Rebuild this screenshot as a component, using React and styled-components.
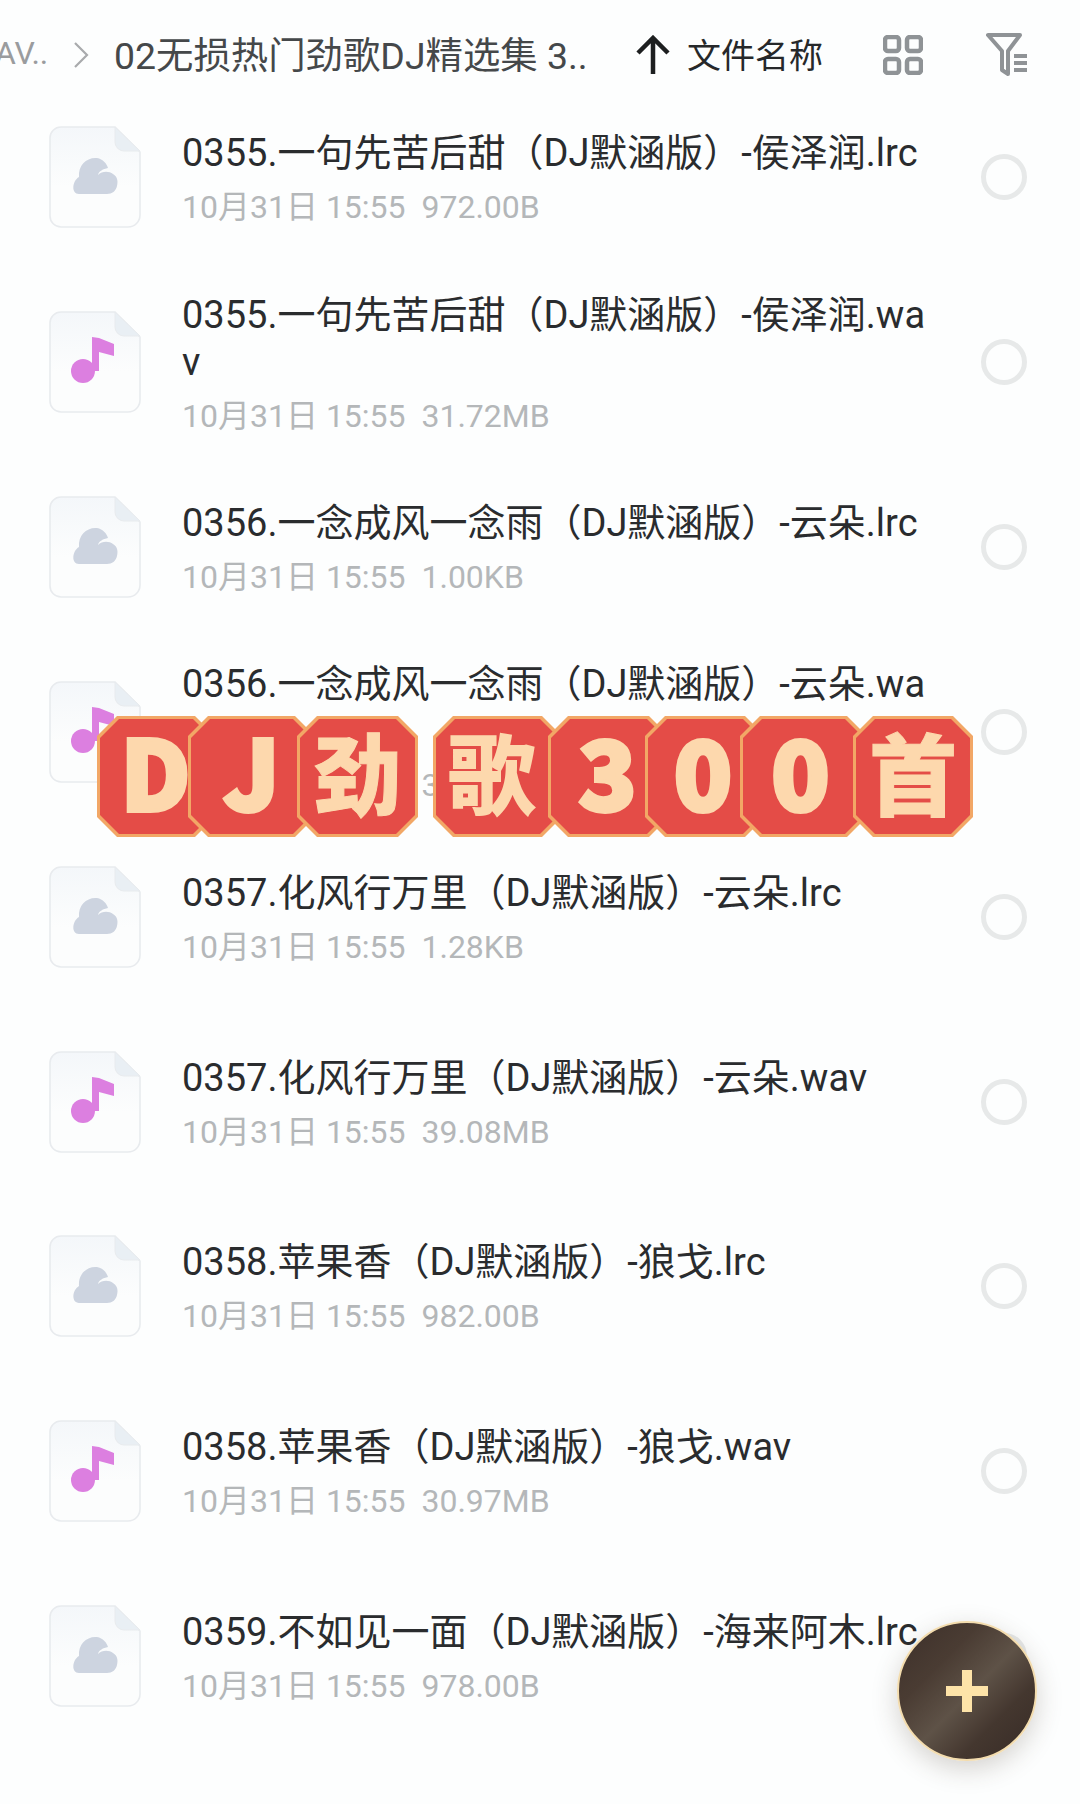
import React from 'react';
import styled, { createGlobalStyle } from 'styled-components';

const GlobalStyle = createGlobalStyle`
  html, body {
    margin: 0;
    padding: 0;
    background: #fdfefe;
  }
`

const Page = styled.div`
  position: relative;
  width: 1080px;
  height: 1804px;
  overflow: hidden;
  background: #fdfefe;
  font-family: Roboto, "Noto Sans CJK SC", sans-serif;
`
const Header = styled.div`
  display: flex;
  align-items: center;
  height: 85px;
  padding-top: 25px;
  box-sizing: border-box;
  margin-left: -5px;
  white-space: nowrap;
`
const Crumb = styled.span`
  color: #9a9c9e;
  font-size: 32px;
  width: 52px;
  margin-bottom: 4px;
`
const Current = styled.span`
  color: #45484a;
  font-size: 37.4px;
  margin-left: 25px;
  margin-bottom: 4px;
  width: 473px;
`
const SortLabel = styled.span`
  color: #26282a;
  font-size: 34px;
  margin-left: 16px;
  margin-bottom: 4px;
  width: 139px;
`
const HeadIcon = styled.svg`
  flex: none;
  display: block;
  margin-left: ${props => props.$left}px;
`
const Row = styled.div`
  display: flex;
  align-items: center;
  height: 184.85px;
  padding-left: 49px;
`
const DocIcon = styled.svg`
  flex: none;
  display: block;
  width: 92px;
  height: 102px;
`
const Info = styled.div`
  width: 752px;
  margin-left: 41px;
  padding-top: 3px;
`
const Title = styled.div`
  color: #2a2c2e;
  font-size: 38px;
  line-height: 47px;
  word-break: break-all;
`
const Meta = styled.div`
  color: #b4b7b9;
  font-size: 32px;
  line-height: 40px;
  margin-top: 10px;
  white-space: pre;
`
const Radio = styled.div`
  flex: none;
  box-sizing: border-box;
  width: 46px;
  height: 46px;
  margin-left: 47px;
  border: 5px solid #e7e9e9;
  border-radius: 50%;
`
const Banner = styled.div`
  position: absolute;
  left: 97px;
  top: 716px;
  display: flex;
  height: 121px;
`
const Tile = styled.div`
  position: relative;
  flex: none;
  width: ${props => props.$w}px;
  height: 121px;
  box-sizing: border-box;
  padding-bottom: 14px;
  padding-left: ${props => Math.max(props.$shift, 0)}px;
  padding-right: ${props => Math.max(-props.$shift, 0)}px;
  margin-left: ${props => props.$gap}px;
  display: flex;
  align-items: center;
  justify-content: center;
  clip-path: polygon(20px 0, calc(100% - 20px) 0, 100% 20px, 100% calc(100% - 20px), calc(100% - 20px) 100%, 20px 100%, 0 calc(100% - 20px), 0 20px);
  background: #f2a766;

  &::before {
    content: '';
    position: absolute;
    inset: 3px;
    background: #e44c47;
    clip-path: polygon(19px 0, calc(100% - 19px) 0, 100% 19px, 100% calc(100% - 19px), calc(100% - 19px) 100%, 19px 100%, 0 calc(100% - 19px), 0 19px);
  }
`
const TileText = styled.span`
  position: relative;
  color: #fdd8ad;
  font-family: "Noto Sans CJK SC", sans-serif;
  font-weight: 900;
  font-size: ${props => props.$size}px;
  line-height: 1;
  -webkit-text-stroke: ${props => props.$stroke}px #fdd8ad;
`
const Fab = styled.div`
  position: absolute;
  left: 897px;
  top: 1621px;
  width: 140px;
  height: 140px;
  box-sizing: border-box;
  border: 2px solid #f3dcae;
  border-radius: 50%;
  background: linear-gradient(135deg, #3c2f29 0%, #4a3c33 30%, #5e5247 52%, #44372f 72%, #362a25 100%);
  box-shadow: 0 8px 26px rgba(70, 55, 40, 0.22);
  display: flex;
  align-items: center;
  justify-content: center;
`

const files = [
  ['0355.一句先苦后甜（DJ默涵版）-侯泽润.lrc', '972.00B'],
  ['0355.一句先苦后甜（DJ默涵版）-侯泽润.wav', '31.72MB'],
  ['0356.一念成风一念雨（DJ默涵版）-云朵.lrc', '1.00KB'],
  ['0356.一念成风一念雨（DJ默涵版）-云朵.wav', '35.20MB'],
  ['0357.化风行万里（DJ默涵版）-云朵.lrc', '1.28KB'],
  ['0357.化风行万里（DJ默涵版）-云朵.wav', '39.08MB'],
  ['0358.苹果香（DJ默涵版）-狼戈.lrc', '982.00B'],
  ['0358.苹果香（DJ默涵版）-狼戈.wav', '30.97MB'],
  ['0359.不如见一面（DJ默涵版）-海来阿木.lrc', '978.00B'],
]

// each tile runs on under the next one, so only a small notch shows between them
const tiles = [
  { t: 'D', w: 118, gap: 0, size: 96, stroke: 4, shift: -1 },
  { t: 'J', w: 127, gap: -27, size: 96, stroke: 4, shift: 0 },
  { t: '劲', w: 121, gap: -18, size: 88, stroke: 1, shift: 0 },
  { t: '歌', w: 129, gap: 15, size: 88, stroke: 0, shift: -12 },
  { t: '3', w: 121, gap: -14, size: 96, stroke: 4, shift: -2 },
  { t: '0', w: 120, gap: -24, size: 96, stroke: 4, shift: -4 },
  { t: '0', w: 127, gap: -25, size: 96, stroke: 4, shift: -6 },
  { t: '首', w: 120, gap: -14, size: 88, stroke: 1, shift: 0 },
]

function FileIcon({ music }) {
  return (
    <DocIcon viewBox="0 0 92 102">
      <defs>
        <linearGradient id="docFill" x1="0" y1="0" x2="0" y2="1">
          <stop offset="0" stopColor="#f4f7fa" />
          <stop offset="0.6" stopColor="#fcfdfd" />
        </linearGradient>
      </defs>
      <path d="M12 1H66L91 26V89a12 12 0 0 1-12 12H12A11 11 0 0 1 1 90V12A11 11 0 0 1 12 1Z" fill="url(#docFill)" stroke="#e8ebee" strokeWidth="1.6" />
      <path d="M66 1V16a9 9 0 0 0 9 9H91Z" fill="#e9eff4" stroke="#e8ebee" strokeWidth="1" />
      {music ? (
        <g fill="#dc7fe0">
          <circle cx="34" cy="60" r="12" />
          <path d="M43 58V26L50 27 65 33V45L50 41V60H43Z" />
        </g>
      ) : (
        <path d="M30 68C22 68 23 55 30 51 29 39 38 31 48 32 54 33 58 38 59 42 54 43 50 45 49 49 53 45 60 45 64 48 69 51 69 56 68 60 67 65 63 68 58 68Z" fill="#cdd4e0" />
      )}
    </DocIcon>
  )
}

export default function App() {
  return (
    <Page>
      <GlobalStyle />
      <Header>
        <Crumb>AV..</Crumb>
        <HeadIcon $left={26} width="16" height="28" viewBox="0 0 16 28">
          <path d="M2 2L14 14 2 26" fill="none" stroke="#a9abad" strokeWidth="2.2" />
        </HeadIcon>
        <Current>02无损热门劲歌DJ精选集 3..</Current>
        <HeadIcon $left={48} width="36" height="40" viewBox="0 0 36 40">
          <path d="M18 39V3M3 18L18 3 33 18" fill="none" stroke="#1d1f20" strokeWidth="4.5" />
        </HeadIcon>
        <SortLabel>文件名称</SortLabel>
        <HeadIcon $left={57} width="40" height="40" viewBox="0 0 40 40">
          <g fill="none" stroke="#8f9396" strokeWidth="4.5">
            <rect x="2" y="2" width="14" height="14" rx="3" />
            <rect x="24" y="2" width="14" height="14" rx="3" />
            <rect x="2" y="24" width="14" height="14" rx="3" />
            <rect x="24" y="24" width="14" height="14" rx="3" />
          </g>
        </HeadIcon>
        <HeadIcon $left={63} width="42" height="44" viewBox="0 0 42 44">
          <path d="M2 2H34L22 18V41L16 37V18Z" fill="none" stroke="#8f9396" strokeWidth="4" strokeLinejoin="round" />
          <path d="M28 23H41M28 30H41M28 37H41" fill="none" stroke="#8f9396" strokeWidth="4" />
        </HeadIcon>
      </Header>
      {files.map((f, i) => (
        <Row key={i}>
          <FileIcon music={f[0].endsWith('.wav')} />
          <Info>
            <Title>{f[0]}</Title>
            <Meta>10月31日 15:55  {f[1]}</Meta>
          </Info>
          <Radio />
        </Row>
      ))}
      <Banner>
        {tiles.map((t, i) => (
          <Tile key={i} $w={t.w} $gap={t.gap} $shift={t.shift}>
            <TileText $size={t.size} $stroke={t.stroke}>{t.t}</TileText>
          </Tile>
        ))}
      </Banner>
      <Fab>
        <svg width="42" height="42" viewBox="0 0 42 42">
          <path d="M16 0H26V16H42V26H26V42H16V26H0V16H16Z" fill="#fde3a8" />
        </svg>
      </Fab>
    </Page>
  )
}
